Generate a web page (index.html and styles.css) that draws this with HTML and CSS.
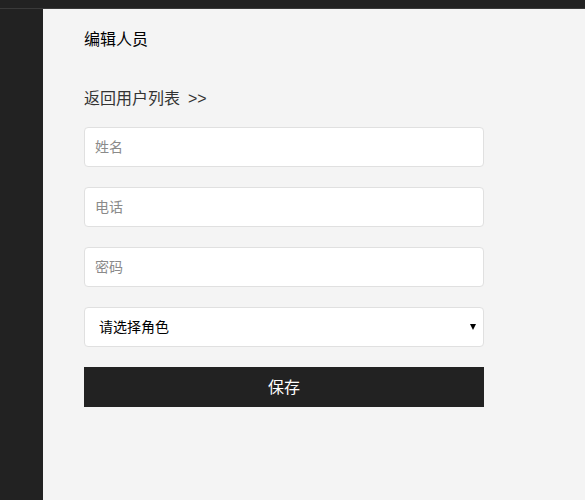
FILE: index.html
```html
<!DOCTYPE html>
<html lang="zh">
<head>
<meta charset="utf-8">
<link rel="stylesheet" href="styles.css">
</head>
<body>
<div class="topbar"></div>
<div class="layout">
  <aside class="sidebar"></aside>
  <main class="content">
    <h1 class="title">编辑人员</h1>
    <a class="back" href="#">返回用户列表<span class="arrows">&gt;&gt;</span></a>
    <form class="form">
      <input class="field" type="text" placeholder="姓名">
      <input class="field" type="text" placeholder="电话">
      <input class="field" type="password" placeholder="密码">
      <div class="select-wrap">
        <select class="field select">
          <option>请选择角色</option>
        </select>
      </div>
      <button class="save" type="button">保存</button>
    </form>
  </main>
</div>
</body>
</html>
```
FILE: styles.css
```css
* { box-sizing: border-box; }
html, body { margin: 0; height: 100%; }
body {
  font-family: "Noto Sans CJK SC", "Noto Sans", sans-serif;
  background: #f4f4f4;
  display: flex;
  flex-direction: column;
}
.topbar {
  height: 8px;
  background: #222;
  border-bottom: 1px solid #3a3a3a;
  flex: none;
  box-sizing: content-box;
}
.layout {
  flex: 1;
  display: flex;
}
.sidebar {
  width: 43px;
  background: #222;
  flex: none;
}
.content {
  flex: 1;
  padding: 18px 0 0 41px;
}
.title {
  margin: 0;
  font-size: 16px;
  font-weight: normal;
  color: #000;
  line-height: 22px;
}
.back {
  display: block;
  height: 22px;
  margin-top: 37px;
  font-size: 16px;
  line-height: 22px;
  color: #333;
  text-decoration: none;
}
.arrows {
  margin-left: 8px;
  font-family: "Liberation Sans", sans-serif;
  font-size: 16px;
  line-height: 1;
}
.form {
  margin-top: 19px;
  width: 400px;
  display: flex;
  flex-direction: column;
  gap: 20px;
}
.field {
  width: 400px;
  height: 40px;
  border: 1px solid #e0e0e0;
  border-radius: 4px;
  background: #fff;
  padding: 0 10px 2px;
  font-family: inherit;
  font-size: 14px;
  color: #000;
  outline: none;
}
.field::placeholder { color: #8a8a8a; }
.select-wrap { position: relative; }
.select {
  appearance: none;
  -webkit-appearance: none;
  padding-left: 14px;
  display: block;
}
.select-wrap::after {
  content: "";
  position: absolute;
  right: 8px;
  top: 17px;
  border-left: 3px solid transparent;
  border-right: 3px solid transparent;
  border-top: 6px solid #000;
  pointer-events: none;
}
.save {
  height: 40px;
  border: none;
  background: #222;
  color: #fff;
  font-family: inherit;
  font-size: 16px;
  padding: 0 0 2px;
}
```
